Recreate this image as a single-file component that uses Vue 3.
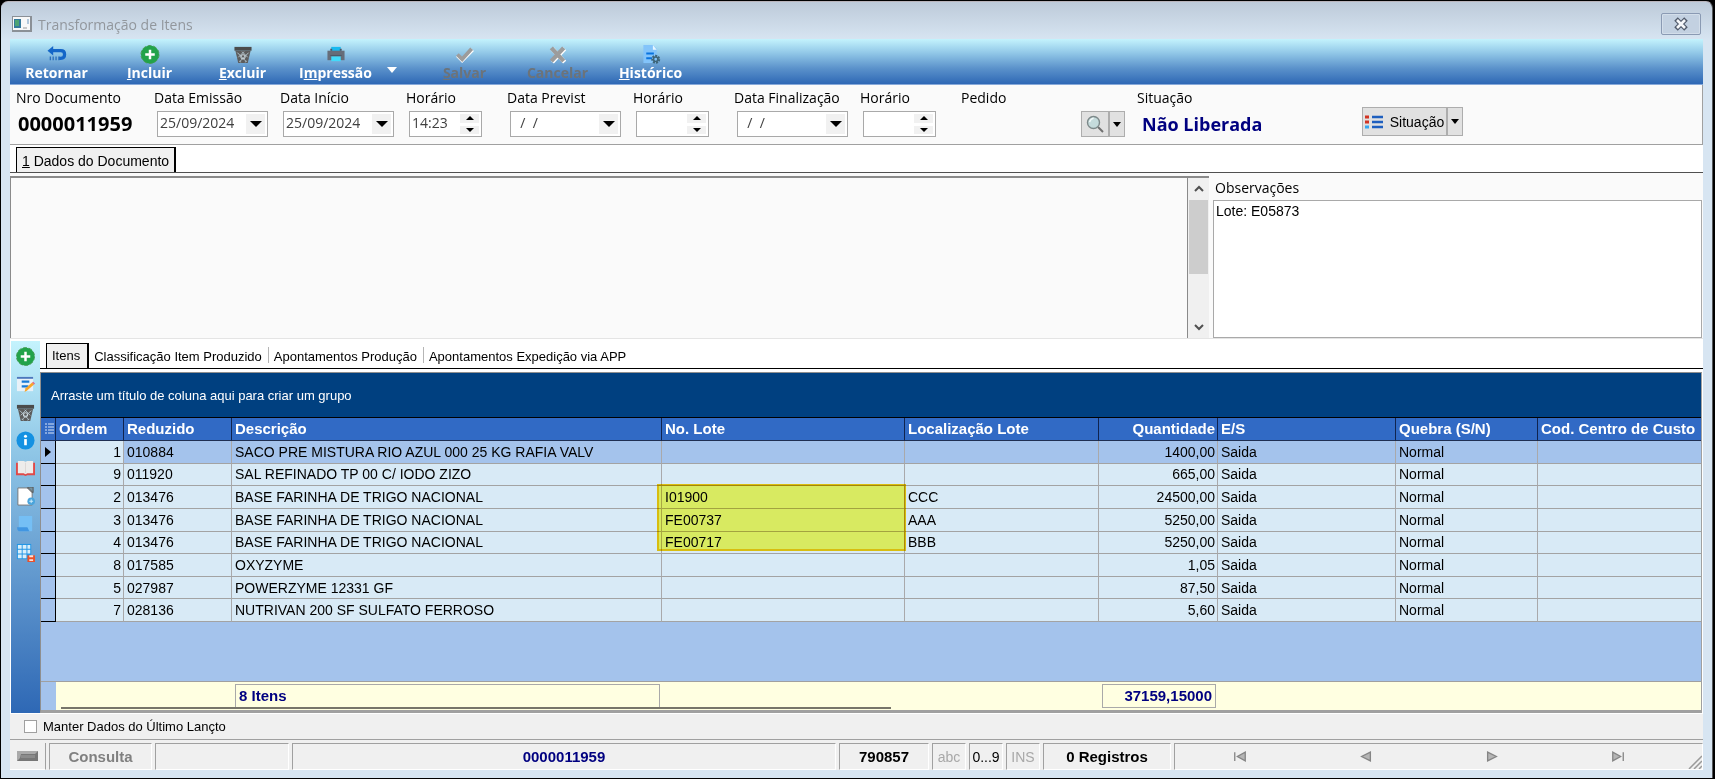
<script setup>
import { ref } from 'vue'

const dates = [
  { id: 'emissao', label: 'Data Emissão', value: '25/09/2024', kind: 'date' },
  { id: 'inicio', label: 'Data Início', value: '25/09/2024', kind: 'date' },
  { id: 'hora-inicio', label: 'Horário', value: '14:23', kind: 'time' },
  { id: 'previst', label: 'Data Previst', value: '  /  /', kind: 'date' },
  { id: 'hora-previst', label: 'Horário', value: '', kind: 'time' },
  { id: 'finalizacao', label: 'Data Finalização', value: '  /  /', kind: 'date' },
  { id: 'hora-final', label: 'Horário', value: '', kind: 'time' }
]

const rail = [
  { icon: 'plus', label: 'Incluir item' },
  { icon: 'edit', label: 'Editar item' },
  { icon: 'trash', label: 'Excluir item' },
  { icon: 'info', label: 'Informações' },
  { icon: 'book', label: 'Livro' },
  { icon: 'page', label: 'Documento' },
  { icon: 'scroll', label: 'Roteiro' },
  { icon: 'sheet', label: 'Salvar grade' }
]

const rows = [
  { ordem: 1, cod: '010884', desc: 'SACO PRE MISTURA RIO AZUL 000 25 KG RAFIA VALV', lote: '', local: '', qtd: '1400,00' },
  { ordem: 9, cod: '011920', desc: 'SAL REFINADO TP 00 C/ IODO ZIZO', lote: '', local: '', qtd: '665,00' },
  { ordem: 2, cod: '013476', desc: 'BASE FARINHA DE TRIGO NACIONAL', lote: 'I01900', local: 'CCC', qtd: '24500,00' },
  { ordem: 3, cod: '013476', desc: 'BASE FARINHA DE TRIGO NACIONAL', lote: 'FE00737', local: 'AAA', qtd: '5250,00' },
  { ordem: 4, cod: '013476', desc: 'BASE FARINHA DE TRIGO NACIONAL', lote: 'FE00717', local: 'BBB', qtd: '5250,00' },
  { ordem: 8, cod: '017585', desc: 'OXYZYME', lote: '', local: '', qtd: '1,05' },
  { ordem: 5, cod: '027987', desc: 'POWERZYME 12331 GF', lote: '', local: '', qtd: '87,50' },
  { ordem: 7, cod: '028136', desc: 'NUTRIVAN 200 SF SULFATO FERROSO', lote: '', local: '', qtd: '5,60' }
]

const obs = ref('Lote: E05873')
const keep = ref(false)
</script>

<template>
  <div class="desktop">
    <svg class="defs" aria-hidden="true">
      <symbol id="i-plus" viewBox="0 0 20 20">
        <circle cx="10" cy="10" r="9.5" fill="#22a34a" stroke="#4a9a55" stroke-width="1" stroke-dasharray="4 2" />
        <path d="M10 5v10M5 10h10" stroke="#fff" stroke-width="2.6" />
      </symbol>
      <symbol id="i-trash" viewBox="0 0 20 20">
        <path d="M1 2h18v4H1z" fill="#4b4b4b" />
        <path d="M2 6h16l-3 13H5z" fill="#5c5c5c" />
        <path d="M4 8l9 9M9 7l6 6M16 8l-9 9M11 7l-6 6M6 17l2 1M14 17l-2 1" stroke="#b3c5ce" stroke-width="1" />
        <circle cx="10" cy="12.500" r="2.300" fill="none" stroke="#d5e0e6" />
      </symbol>
      <symbol id="i-edit" viewBox="0 0 20 20">
        <path d="M1 2h17v15H1z" fill="#e8f1f8" />
        <path d="M1 2h17v2H1z" fill="#4c78bd" />
        <path d="M6 7h8M6 12h7" stroke="#187bd7" stroke-width="2.500" />
        <path d="M9 18l1-4 7-6 2 2-7 6z" fill="#f9a62b" />
        <path d="M17 8l1-1 2 2-1 1z" fill="#e35d86" />
      </symbol>
      <symbol id="i-info" viewBox="0 0 20 20">
        <circle cx="10" cy="10" r="9.500" fill="#1491e2" />
        <circle cx="10" cy="5.500" r="1.600" fill="#fff" />
        <path d="M10 8.500V15" stroke="#fff" stroke-width="2.800" />
      </symbol>
      <symbol id="i-book" viewBox="0 0 20 20">
        <path d="M0 4h20v13h-8l-2 1-2-1H0z" fill="#df4a49" />
        <path d="M2 2h6l2 1 2-1h6v13h-6l-2 1-2-1H2z" fill="#eeeceb" />
        <path d="M10 4v11" stroke="#dcd7d5" />
      </symbol>
      <symbol id="i-page" viewBox="0 0 20 20">
        <path d="M2 1h15v18H2z" fill="#fff" stroke="#777" />
        <path d="M12 0h6v6zM12 1l5 5" fill="#77939f" stroke="#555" />
        <circle cx="16" cy="15" r="4" fill="#49a4dc" />
        <path d="M16 13v4M14 15h4" stroke="#d3eefb" />
      </symbol>
      <symbol id="i-scroll" viewBox="0 0 20 20">
        <path d="M3 1h14v16H3z" fill="#75bff5" />
        <path d="M1 13h11l2 4H3q-2-1-2-4z" fill="#4196e2" />
      </symbol>
      <symbol id="i-sheet" viewBox="0 0 20 20">
        <path d="M1 1h15v16H1z" fill="#2496e5" />
        <path d="M2 2h4v4H2zM7 2h4v4H7zM12 2h3v4h-3zM2 7h4v4H2zM7 7h4v4H7zM12 7h3v4h-3zM2 12h4v4H2zM7 12h4v4H7z" fill="#d9effb" />
        <path d="M12 13h8v7h-8z" fill="#e8522c" />
        <path d="M14 13h4v2h-4zM14 17h4v2h-4z" fill="#fbe1d9" />
      </symbol>
    </svg>

    <div class="window">
      <header class="titlebar">
        <svg class="app-icon" viewBox="0 0 20 16">
          <path d="M0 0h20v16H0z" fill="#8b9096" />
          <path d="M1 1h17v13H1z" fill="#f8f8f8" />
          <path d="M2 3h7v9H2z" fill="#34799b" />
          <path d="M3 4h4v6H3z" fill="#4da374" />
          <path d="M11 12h4" stroke="#999" />
          <path d="M16 3v5" stroke="#6c98c0" />
        </svg>
        <h1>Transformação de Itens</h1>
        <button class="close" type="button" aria-label="Fechar">
          <svg width="16" height="14" viewBox="0 0 16 14">
            <path d="M3 2l10 10M13 2L3 12" stroke="#505a6b" stroke-width="5" />
            <path d="M4 3l8 8M12 3L4 11" stroke="#f5f7fa" stroke-width="2.600" />
          </svg>
        </button>
      </header>

      <main class="client">
        <nav class="toolbar">
          <button type="button">
            <svg viewBox="0 0 20 20"><path d="M3 6h11q4 0 4 4t-4 4h-2" fill="none" stroke="#1466c8" stroke-width="3.400" /><path d="M0 6l6-5v10z" fill="#1466c8" /><path d="M3 12v4M6 12v4M9 12v4M12 12v4" stroke="#2b70bd" stroke-width="1.400" /></svg>
            <span>Retornar</span>
          </button>
          <button type="button"><svg><use href="#i-plus" /></svg><span><u>I</u>ncluir</span></button>
          <button type="button"><svg><use href="#i-trash" /></svg><span><u>E</u>xcluir</span></button>
          <button class="print" type="button">
            <svg viewBox="0 0 20 20"><path d="M5 2h10v5H5z" fill="#19b9ef" /><path d="M1 6h18v10H1z" fill="#666d79" /><path d="M4 4h2v2H4zM14 4h2v2h-2z" fill="#4b5666" /><path d="M5 12h10v5H5z" fill="#42dafa" /><path d="M4 11h12" stroke="#4b5666" /></svg>
            <span>I<u>m</u>pressão</span>
          </button>
          <button class="menu-caret" type="button" aria-label="Opções de impressão"><i></i></button>
          <button type="button" disabled>
            <svg viewBox="0 0 20 20"><path d="M2 11l5 5L18 5" fill="none" stroke="#fff" stroke-width="4" /><path d="M2 10l5 5L17 4" fill="none" stroke="#9c9c9c" stroke-width="4" /></svg>
            <span><u>S</u>alvar</span>
          </button>
          <button type="button" disabled>
            <svg viewBox="0 0 20 20"><path d="M4 4l13 14M17 4L4 18" stroke="#fff" stroke-width="4.500" /><path d="M3 3l13 14M16 3L3 17" stroke="#9c9c9c" stroke-width="4.500" /></svg>
            <span>Cancelar</span>
          </button>
          <button type="button">
            <svg viewBox="0 0 20 20"><path d="M2 0h10l4 4v15H2z" fill="#83c4fa" /><path d="M12 0l4 5h-4z" fill="#e7f6ff" /><path d="M5 9h8M5 14h6" stroke="#0873df" stroke-width="2" /><circle cx="15" cy="15" r="3.400" fill="none" stroke="#3e6579" stroke-width="2.600" stroke-dasharray="2 1" /><circle cx="15" cy="15" r="2.300" fill="none" stroke="#3e6579" stroke-width="1.600" /></svg>
            <span><u>H</u>istórico</span>
          </button>
        </nav>

        <section class="document">
          <div class="field number">
            <span class="label">Nro Documento</span>
            <strong>0000011959</strong>
          </div>
          <div v-for="d in dates" :key="d.id" class="field" :class="d.kind">
            <label :for="d.id">{{ d.label }}</label>
            <div class="box">
              <input :id="d.id" type="text" :value="d.value" />
              <button v-if="d.kind === 'date'" class="drop" type="button" aria-label="Abrir calendário"><i></i></button>
              <span v-else class="spin">
                <button type="button" aria-label="Aumentar"><i class="up"></i></button>
                <button type="button" aria-label="Diminuir"><i></i></button>
              </span>
            </div>
          </div>
          <div class="field order">
            <span class="label">Pedido</span>
            <div class="split">
              <button type="button" aria-label="Pesquisar pedido">
                <svg width="20" height="20" viewBox="0 0 20 20"><path d="M13 13l5 5" stroke="#707070" stroke-width="2" /><circle cx="8.500" cy="8.500" r="6" fill="#c5dbdc" stroke="#7d898a" stroke-width="1.400" /><path d="M4.500 8q1-3 4-4" fill="none" stroke="#f3fafa" stroke-width="1.500" /></svg>
              </button>
              <button type="button" aria-label="Opções de pesquisa"><i></i></button>
            </div>
          </div>
          <div class="field status">
            <span class="label">Situação</span>
            <strong>Não Liberada</strong>
          </div>
          <div class="split situation">
            <button type="button">
              <svg width="18" height="14" viewBox="0 0 18 14"><path d="M7 2h11M7 7h11M7 12h11" stroke="#1e5fbf" stroke-width="2.600" /><path d="M0 2h4M0 7h4" stroke="#d23423" stroke-width="3" /><path d="M0 12h4" stroke="#36a7f0" stroke-width="3" /></svg>
              Situação
            </button>
            <button type="button" aria-label="Opções de situação"><i></i></button>
          </div>
        </section>

        <div class="tabs main-tabs">
          <button class="active" type="button"><u>1</u>&nbsp;Dados do Documento</button>
        </div>

        <section class="details">
          <div class="canvas"></div>
          <div class="scrollbar">
            <button type="button" aria-label="Rolar para cima"><svg width="10" height="8" viewBox="0 0 10 8"><path d="M1 6l4-4 4 4" /></svg></button>
            <div class="thumb"></div>
            <button type="button" aria-label="Rolar para baixo"><svg width="10" height="8" viewBox="0 0 10 8"><path d="M1 2l4 4 4-4" /></svg></button>
          </div>
          <div class="notes">
            <label for="obs">Observações</label>
            <textarea id="obs" v-model="obs"></textarea>
          </div>
        </section>

        <section class="items">
          <aside class="rail">
            <button v-for="r in rail" :key="r.icon" type="button" :aria-label="r.label">
              <svg><use :href="'#i-' + r.icon" /></svg>
            </button>
          </aside>
          <div class="items-main">
            <div class="tabs item-tabs">
              <button class="active" type="button">Itens</button>
              <button type="button">Classificação Item Produzido</button>
              <button type="button">Apontamentos Produção</button>
              <button type="button">Apontamentos Expedição via APP</button>
            </div>
            <div class="grid">
              <p class="group-hint">Arraste um título de coluna aqui para criar um grupo</p>
              <table>
                <colgroup>
                  <col class="c-mark" /><col class="c-ord" /><col class="c-cod" /><col /><col class="c-lote" />
                  <col class="c-loc" /><col class="c-qtd" /><col class="c-es" /><col class="c-qbr" /><col class="c-cc" />
                </colgroup>
                <thead>
                  <tr>
                    <th class="mark">
                      <svg width="9" height="13" viewBox="0 0 9 13"><path d="M0 1h2M0 4h2M0 7h2M0 10h2M3 1h6M3 4h6M3 7h6M3 10h6" stroke="#dbe5f7" /></svg>
                    </th>
                    <th>Ordem</th><th>Reduzido</th><th>Descrição</th><th>No. Lote</th><th>Localização Lote</th>
                    <th class="num">Quantidade</th><th>E/S</th><th>Quebra (S/N)</th><th>Cod. Centro de Custo</th>
                  </tr>
                </thead>
                <tbody>
                  <tr v-for="(r, i) in rows" :key="r.ordem" :class="{ current: i === 0 }">
                    <td class="mark"><i v-if="i === 0"></i></td>
                    <td class="num ord">{{ r.ordem }}</td>
                    <td>{{ r.cod }}</td>
                    <td>{{ r.desc }}</td>
                    <td class="lote">{{ r.lote }}<span v-if="i === 2" class="marker"></span></td>
                    <td>{{ r.local }}</td>
                    <td class="num">{{ r.qtd }}</td>
                    <td>Saida</td>
                    <td>Normal</td>
                    <td></td>
                  </tr>
                </tbody>
              </table>
              <div class="totals">
                <span class="gutter"></span>
                <span class="total count">8 Itens</span>
                <span class="total sum">37159,15000</span>
                <span class="hbar"></span>
              </div>
            </div>
          </div>
        </section>

        <label class="keep"><input v-model="keep" type="checkbox" />Manter Dados do Último Lançto</label>

        <footer class="statusbar">
          <span class="led">
            <svg width="21" height="10" viewBox="0 0 21 10"><path d="M0 0h21v10H0z" fill="#777" /><path d="M0 0h21l-3 3H4L3 7l-3 3z" fill="#aaa" /><path d="M4 4h14v3H4z" fill="#8b8b8b" /></svg>
          </span>
          <span class="cell mode">Consulta</span>
          <span class="cell blank"></span>
          <span class="cell doc">0000011959</span>
          <span class="cell code">790857</span>
          <span class="cell key off">abc</span>
          <span class="cell key">0...9</span>
          <span class="cell key off">INS</span>
          <span class="cell count-reg">0 Registros</span>
          <span class="cell pager">
            <button type="button" aria-label="Primeiro"><svg viewBox="0 0 16 12"><path d="M2 1v10" /><path d="M14 1v10L5 6z" /></svg></button>
            <button type="button" aria-label="Anterior"><svg viewBox="0 0 16 12"><path d="M13 1v10L3 6z" /></svg></button>
            <button type="button" aria-label="Próximo"><svg viewBox="0 0 16 12"><path d="M3 1v10l10-5z" /></svg></button>
            <button type="button" aria-label="Último"><svg viewBox="0 0 16 12"><path d="M2 1v10l9-5z" /><path d="M14 1v10" /></svg></button>
            <svg class="grip" viewBox="0 0 14 14"><path d="M14 1L1 14M14 6l-8 8M14 11l-3 3" stroke="#9a9a9a" stroke-width="1.500" /></svg>
          </span>
        </footer>
      </main>
    </div>
  </div>
</template>

<style>
body { background: #000; }
</style>

<style scoped>
* { box-sizing: border-box; }
.desktop {
  display: flex;
  min-height: 100vh;
  padding: 1px 2px 1px 1px;
  background: #000;
  font: 14px/18px "Liberation Sans", Arial, sans-serif;
  color: #000;
}
.defs { position: absolute; width: 0; height: 0; }
button { margin: 0; padding: 0; border: 0; background: none; font: inherit; color: inherit; }
i {
  display: block;
  width: 0;
  height: 0;
  border: 5px solid transparent;
  border-top: 6px solid #000;
  border-bottom: 0;
}
.window {
  flex: 1;
  min-width: 0;
  display: flex;
  flex-direction: column;
  padding: 0 9px 8px;
  border-top: 1px solid #b9b4bb;
  border-right: 1px solid #55585c;
  border-radius: 7px 7px 0 0;
  background: linear-gradient(#bdcad9 0, #d7e5f2 38px, #d7e5f2 100%);
}
.titlebar { display: flex; align-items: center; height: 37px; padding: 8px 2px 0; }
.app-icon { width: 20px; height: 16px; margin-bottom: 1px; }
h1 { flex: 1; margin: 0 0 0 6px; font: 14px/20px "Open Sans", "Noto Sans", sans-serif; color: #92979d; }
.close {
  display: flex;
  align-items: center;
  justify-content: center;
  width: 40px;
  height: 22px;
  margin-bottom: 1px;
  border: 1px solid #8a9ab3;
  border-radius: 2px;
  background: #c3d1e1;
  box-shadow: inset 0 0 0 1px #d3deea;
}
.client { flex: 1; display: flex; flex-direction: column; background: #fff; }

.toolbar {
  display: flex;
  height: 46px;
  border-bottom: 1px solid #87a9d9;
  background: linear-gradient(#c4f3fd, #93c9e8 30%, #5b92cb 65%, #2e68b5);
  font: bold 14px/18px "Open Sans", "Noto Sans", sans-serif;
  color: #fff;
}
.toolbar button { display: flex; flex-direction: column; align-items: center; width: 93px; padding-top: 6px; }
.toolbar svg { width: 20px; height: 19px; }
.toolbar button:disabled { color: #6c7379; }
.toolbar .menu-caret { width: 36px; padding: 28px 16px 0 0; }
.menu-caret i { border-top-color: #fff; }

.document {
  display: flex;
  height: 60px;
  padding-left: 6px;
  border-right: 1px solid #a0a0a0;
  border-bottom: 1px solid #a0a0a0;
  background: #fafafa;
  font: 14px/20px "Open Sans", "Noto Sans", sans-serif;
}
.field { width: 126px; padding-top: 3px; }
.field label, .label { display: block; height: 23px; }
.field.number { width: 138px; }
.field.time { width: 101px; }
.field.order { width: 176px; }
.field.status { width: 225px; }
.field strong { display: block; padding-left: 2px; font-size: 20px; line-height: 26px; }
.field.status strong { padding-left: 5px; font-size: 18px; color: #000080; }
.box { display: flex; width: 111px; height: 26px; margin-left: 3px; padding: 2px; border: 1px solid #a9a9a9; background: #fff; }
.time .box { width: 73px; }
.box input { flex: 1; width: 0; padding: 0 0 3px; border: 0; background: none; outline: 0; font: 14px/18px "Open Sans", "Noto Sans", sans-serif; color: #404040; white-space: pre; }
.drop, .spin { display: flex; width: 19px; background: #f1f1f1; align-items: center; justify-content: center; }
.drop i { border-width: 6px 6px 0; }
.spin { flex-direction: column; gap: 3px; background: #fff; }
.spin button { display: flex; flex: 1; width: 100%; align-items: center; justify-content: center; background: #f1f1f1; }
.spin i { border-width: 4px 4px 0; }
.spin i.up { border: 4px solid transparent; border-top: 0; border-bottom-color: #000; }
.split { display: flex; width: 44px; height: 26px; border: 1px solid #adadad; background: #e1e1e1; }
.order .split { margin-left: auto; margin-right: 12px; }
.split button { display: flex; flex: 1; align-items: center; justify-content: center; gap: 7px; }
.split button + button { flex: none; width: 16px; border-left: 2px solid #adadad; }
.split i { border-width: 5px 4px 0; }
.split.situation { width: 101px; height: 29px; margin-top: 22px; font: 14px/18px "Liberation Sans", Arial, sans-serif; }

.tabs { display: flex; align-items: flex-end; border-bottom: 1px solid #000; background: #fff; }
.tabs button { padding: 2px 5px 0; white-space: nowrap; }
.tabs .active { border: 1px solid #000; border-bottom: 0; background: #f0f0f0; }
.main-tabs { height: 28px; padding-left: 6px; border-color: #505050; }
.main-tabs .active { height: 25px; border-right-width: 2px; }

.details { display: flex; height: 166px; padding-top: 3px; border-bottom: 1px solid #e4e4e4; background: #fafafa; }
.canvas { flex: 1; border: 1px solid #8a8a8a; border-top-width: 2px; border-bottom: 0; }
.scrollbar { display: flex; flex-direction: column; width: 21px; padding: 0 1px; border-top: 2px solid #8a8a8a; background: #f0f0f0; }
.scrollbar button { display: flex; height: 22px; align-items: center; justify-content: center; }
.scrollbar path { fill: none; stroke: #505050; stroke-width: 2; }
.thumb { height: 74px; margin-bottom: auto; background: #cdcdcd; }
.notes { display: flex; flex-direction: column; width: 494px; padding: 2px 1px 0 4px; }
.notes label { padding: 0 2px 2px; font: 14px/20px "Open Sans", "Noto Sans", sans-serif; }
.notes textarea { flex: 1; padding: 1px 2px; border: 1px solid #a9a9a9; background: #fff; resize: none; outline: 0; font: 14px/18px "Liberation Sans", Arial, sans-serif; color: #000; }

.items { display: flex; flex: 1; padding-top: 2px; }
.rail { display: flex; flex-direction: column; width: 29px; margin-left: 1px; padding-top: 1px; background: linear-gradient(#c4f3fd, #8fc6e6 30%, #5b92cb 68%, #2e68b5); }
.rail button { display: flex; height: 28px; align-items: center; justify-content: center; }
.rail svg { width: 19px; height: 19px; }
.items-main { display: flex; flex: 1; min-width: 0; flex-direction: column; }
.item-tabs { height: 28px; padding-left: 6px; font-size: 13px; }
.item-tabs button { height: 22px; padding: 0 7px 0 5px; line-height: 22px; }
.item-tabs button + button + button { position: relative; }
.item-tabs button + button + button::before { content: ""; position: absolute; top: 1px; left: -1px; width: 1px; height: 16px; background: #b5b5b5; }
.item-tabs .active { height: 25px; border-right-width: 2px; }
.grid { display: flex; flex: 1; flex-direction: column; margin: 3px 1px 0 0; border: 1px solid #8f8f8f; border-right-color: #a0a0a0; border-bottom: 3px solid #a0a0a0; background: #a4c3ec; }
.group-hint { margin: 0; padding: 14px 10px 0; height: 44px; background: #004080; color: #fff; font-size: 13px; }
table { width: 100%; height: 205px; border-collapse: separate; border-spacing: 0; table-layout: fixed; border-top: 1px solid #000; }
.c-mark { width: 15px; } .c-ord { width: 68px; } .c-cod { width: 108px; } .c-lote { width: 243px; }
.c-loc { width: 194px; } .c-qtd { width: 119px; } .c-es { width: 178px; } .c-qbr { width: 142px; } .c-cc { width: 163px; }
th, td { padding: 0 3px; text-align: left; white-space: nowrap; line-height: 18px; }
th { height: 23px; border-right: 1px solid #10244f; border-bottom: 1px solid #1f2f52; background: #316ac5; color: #fff; font-size: 15px; }
td { border-right: 1px solid #a9a9ab; border-bottom: 1px solid #a3a3a3; background: #d8eaf6; }
th:last-child, td:last-child { border-right: 0; }
.current td { background: #a4c3ec; }
.current .ord { background: #d8eaf6; }
.num { text-align: right; padding-right: 2px; }
.mark, .current .mark { padding: 0 0 0 4px; }
td.mark { border: 1px solid #000; border-top: 0; border-left: 0; background: #a4c3ec; }
.mark svg { display: block; }
.mark i { border: 5px solid transparent; border-left: 6px solid #000; border-right: 0; }
.lote { position: relative; }
.marker { position: absolute; top: -2px; left: -5px; width: calc(100% + 7px); height: 67px; border: 2px solid #ffce10; background: #ffff64; background-clip: padding-box; mix-blend-mode: multiply; z-index: 1; }
.totals {
  position: relative;
  display: grid;
  grid-template-columns: 194px 1fr 442px 114px 485px;
  height: 29px;
  margin-top: auto;
  padding: 2px 0 3px;
  border-top: 1px solid #a0a0a0;
  background: #ffffe1;
}
.gutter { position: absolute; top: 0; bottom: 0; left: 0; width: 15px; background: #a4c3ec; }
.total { border: 1px solid #a9a9a9; padding: 0 3px; font-weight: bold; font-size: 15px; line-height: 22px; color: #000080; }
.count { grid-column: 2; }
.sum { grid-column: 4; text-align: right; }
.hbar { position: absolute; bottom: 1px; left: 20px; width: 50%; height: 2px; background: #77756a; }

.keep { display: flex; align-items: center; gap: 6px; height: 27px; padding-left: 14px; border-top: 1px solid #fff; border-bottom: 1px solid #a0a0a0; background: #f0f0f0; font-size: 13px; }
.keep input { appearance: none; width: 13px; height: 13px; margin: 0; border: 1px solid #a0a0a0; background: #fff; }
.statusbar { display: flex; gap: 3px; height: 30px; padding-top: 3px; background: #f0f0f0; }
.cell { display: flex; align-items: center; justify-content: center; border: 1px solid #fff; border-top-color: #a0a0a0; border-left-color: #a0a0a0; font-weight: bold; font-size: 15px; }
.led { display: flex; align-items: center; justify-content: center; width: 36px; border-right: 1px solid #a0a0a0; border-bottom: 1px solid #fff; }
.mode { width: 103px; color: #808080; }
.blank { width: 134px; }
.doc { flex: 1; color: #000080; }
.code { width: 90px; }
.key { width: 34px; font-weight: normal; font-size: 14px; }
.off { color: #a8a8a8; }
.count-reg { width: 128px; }
.pager { position: relative; width: 529px; justify-content: flex-start; padding-left: 2px; }
.pager button { display: flex; width: 126px; justify-content: center; }
.pager button svg { width: 14px; height: 11px; }
.pager button path { fill: #b5b5b5; stroke: #858585; stroke-width: 1.5; }
.grip { position: absolute; right: 0; bottom: 0; width: 14px; height: 14px; }
</style>
